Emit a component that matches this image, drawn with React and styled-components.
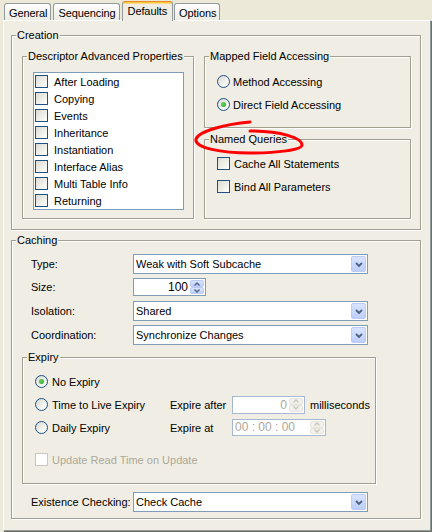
import React from 'react'
import styled, { createGlobalStyle } from 'styled-components'

const PANEL = '#f0eee4'

const GlobalStyle = createGlobalStyle`
	html, body {
		margin: 0;
		padding: 0;
		background: #ece9d8;
	}
	body {
		font-family: 'Liberation Sans', Arial, sans-serif;
		font-size: 11px;
		color: #000;
	}
`

const Window = styled.div`
	position: relative;
	width: 432px;
	height: 532px;
	box-sizing: border-box;
	padding: 1px 0 0 3px;
	background: #ece9d8;
	overflow: hidden;
`

const TabStrip = styled.div`
	display: flex;
	align-items: flex-end;
	height: 19px;
	padding-left: 1px;
`

const Tab = styled.div`
	position: relative;
	box-sizing: border-box;
	height: ${(p) => (p.$active ? '20px' : '17px')};
	margin-right: ${(p) => (p.$active ? '1px' : '2px')};
	margin-bottom: ${(p) => (p.$active ? '-1px' : '0')};
	padding: ${(p) => (p.$active ? '2px 5px 0' : '2px 3px 0 4px')};
	line-height: 14px;
	border: 1px solid #919b9c;
	border-top-color: ${(p) => (p.$active ? '#e68b2c' : '#919b9c')};
	border-bottom: none;
	border-radius: 3px 3px 0 0;
	background: ${(p) => (p.$active ? PANEL : 'linear-gradient(#fefefe, #ecebe4)')};
	box-shadow: ${(p) => (p.$active ? 'inset 0 1px 0 #ffc83c, inset 0 2px 0 #fbd989' : 'none')};
	z-index: ${(p) => (p.$active ? 1 : 0)};
	letter-spacing: -0.1px;
`

const Panel = styled.div`
	box-sizing: border-box;
	width: 428px;
	height: 511px;
	padding: 8px 9px 0 7px;
	background: ${PANEL};
	border: 1px solid #fff;
	border-right-color: #919b9c;
	border-bottom-color: #919b9c;
	box-shadow: 1px 1px 0 #6f6d62;
	display: flex;
	flex-direction: column;
`

const Group = styled.fieldset`
	box-sizing: border-box;
	margin: ${(p) => p.$margin || '0'};
	padding: 0;
	min-width: 0;
	width: ${(p) => (p.$w ? `${p.$w}px` : 'auto')};
	flex: ${(p) => (p.$grow ? '1' : 'none')};
	border: 1px solid #a09f90;
	box-shadow: inset 1px 1px 0 #fff, 1px 1px 0 #fff;
	display: flex;
	flex-direction: column;
`

const Legend = styled.legend`
	margin-left: 4px;
	padding: 0 1px;
	line-height: 13px;
	background: ${PANEL};
`

const GroupBody = styled.div`
	padding: ${(p) => p.$pad};
	display: flex;
	flex-direction: ${(p) => (p.$row ? 'row' : 'column')};
	gap: ${(p) => p.$gap || '0'};
	flex: 1;
`

const Column = styled.div`
	display: flex;
	flex-direction: column;
	width: ${(p) => p.$w}px;
`

const List = styled.div`
	box-sizing: border-box;
	width: 151px;
	border: 1px solid #7f9db9;
	background: #fff;
`

const ListRow = styled.div`
	display: flex;
	align-items: center;
	gap: 6px;
	height: 17px;
	padding-left: 1px;
`

const OptionRow = styled.div`
	display: flex;
	align-items: center;
	gap: ${(p) => p.$gap || '4px'};
	height: 23px;
	padding-left: ${(p) => p.$indent || '12px'};
	margin-top: ${(p) => p.$top || '0'};
	color: ${(p) => (p.$disabled ? '#aca899' : '#000')};
`

const Check = styled.span`
	flex: none;
	box-sizing: border-box;
	width: 13px;
	height: 13px;
	border: 1px solid ${(p) => (p.$disabled ? '#cac8bb' : '#1c5180')};
	background: ${(p) => (p.$disabled ? '#fff' : 'linear-gradient(135deg, #dcdbd3 0%, #f4f4f0 70%, #fff 100%)')};
`

const Radio = styled.span`
	flex: none;
	box-sizing: border-box;
	width: 13px;
	height: 13px;
	border-radius: 50%;
	border: 1px solid #1c5180;
	background: linear-gradient(135deg, #d9d8cf 0%, #f3f3ef 60%, #fff 100%);
	display: flex;
	align-items: center;
	justify-content: center;

	&::after {
		content: '';
		display: ${(p) => (p.$checked ? 'block' : 'none')};
		width: 5px;
		height: 5px;
		border-radius: 50%;
		background: radial-gradient(circle at 40% 40%, #62d75e, #21a121);
	}
`

const Field = styled.div`
	display: flex;
	align-items: ${(p) => (p.$top ? 'flex-start' : 'center')};
	height: ${(p) => p.$h || 20}px;
	padding-left: 9px;
	margin-top: ${(p) => p.$mt || '0'};
`

const FieldLabel = styled.span`
	width: 102px;
	flex: none;
	${(p) => p.$top && 'line-height: 18px;'}
`

const Combo = styled.div`
	box-sizing: border-box;
	display: flex;
	align-items: center;
	width: 235px;
	height: 20px;
	padding: 1px 1px 1px 2px;
	border: 1px solid #7f9db9;
	background: #fff;
`

const ComboText = styled.span`
	flex: 1;
	white-space: nowrap;
`

const DropButton = styled.span`
	box-sizing: border-box;
	width: 15px;
	height: 16px;
	border: 1px solid #bccbf3;
	border-radius: 2px;
	background: linear-gradient(#d9e4fe, #bccffb);
	display: flex;
	align-items: center;
	justify-content: center;
`

const Spinner = styled.div`
	box-sizing: border-box;
	display: flex;
	align-items: stretch;
	width: ${(p) => p.$w}px;
	height: ${(p) => p.$h}px;
	padding: 1px;
	border: 1px solid ${(p) => (p.$disabled ? '#a6b8cf' : '#7f9db9')};
	background: #fff;
	color: ${(p) => (p.$disabled ? '#aca899' : '#000')};
`

const SpinValue = styled.span`
	flex: 1;
	text-align: ${(p) => p.$align || 'right'};
	padding: 0 2px 0 1px;
	line-height: ${(p) => p.$lh || 14}px;
	font-size: ${(p) => p.$fs || 11}px;
	white-space: nowrap;
`

const SpinButtons = styled.div`
	display: flex;
	flex-direction: column;
	width: 14px;
`

const SpinButton = styled.span`
	flex: 1;
	box-sizing: border-box;
	border: 1px solid ${(p) => (p.$disabled ? '#e6e4dc' : '#bccbf3')};
	border-radius: 2px;
	background: ${(p) => (p.$disabled ? '#f2f1ec' : 'linear-gradient(#d9e4fe, #bccffb)')};
	display: flex;
	align-items: center;
	justify-content: center;
`

const ExpiryChoice = styled.span`
	display: flex;
	align-items: center;
	gap: 4px;
	width: 131px;
	flex: none;
`

const ExpiryLabel = styled.span`
	width: 58px;
	flex: none;
`

const Unit = styled.span`
	margin-left: 1px;
`

const Scribble = styled.svg`
	position: absolute;
	left: 0;
	top: 0;
	pointer-events: none;
`

const Chevron = ({ down = true, color = '#4d6185' }) => (
	<svg width="8" height="5" viewBox="0 0 8 5">
		<path
			d={down ? 'M1 1 L4 4 L7 1' : 'M1 4 L4 1 L7 4'}
			fill="none"
			stroke={color}
			strokeWidth="1.8"
		/>
	</svg>
)

const SmallArrow = ({ down, color }) => (
	<svg width="6" height="4" viewBox="0 0 6 4">
		<path d={down ? 'M0.5 0.5 L3 3 L5.5 0.5' : 'M0.5 3.5 L3 1 L5.5 3.5'} fill="none" stroke={color} strokeWidth="1.4" />
	</svg>
)

function ComboBox({ value }) {
	return (
		<Combo>
			<ComboText>{value}</ComboText>
			<DropButton>
				<Chevron />
			</DropButton>
		</Combo>
	)
}

function SpinBox({ value, w, h, disabled, align, fs }) {
	const arrow = disabled ? '#c9c7bc' : '#4d6185'
	return (
		<Spinner $w={w} $h={h} $disabled={disabled}>
			<SpinValue $align={align} $lh={h - 4} $fs={fs}>
				{value}
			</SpinValue>
			<SpinButtons>
				<SpinButton $disabled={disabled}>
					<SmallArrow color={arrow} />
				</SpinButton>
				<SpinButton $disabled={disabled}>
					<SmallArrow down color={arrow} />
				</SpinButton>
			</SpinButtons>
		</Spinner>
	)
}

const properties = [
	'After Loading',
	'Copying',
	'Events',
	'Inheritance',
	'Instantiation',
	'Interface Alias',
	'Multi Table Info',
	'Returning',
]

const tabs = ['General', 'Sequencing', 'Defaults', 'Options']

export default function App() {
	return (
		<Window>
			<GlobalStyle />
			<TabStrip>
				{tabs.map((t) => (
					<Tab key={t} $active={t === 'Defaults'}>
						{t}
					</Tab>
				))}
			</TabStrip>
			<Panel>
				<Group $w={410}>
					<Legend>Creation</Legend>
					<GroupBody $row $gap="10px" $pad="8px 9px 10px 10px">
						<Group $w={172}>
							<Legend>Descriptor Advanced Properties</Legend>
							<GroupBody $pad="9px 0 8px 10px">
								<List>
									{properties.map((p) => (
										<ListRow key={p}>
											<Check />
											{p}
										</ListRow>
									))}
								</List>
							</GroupBody>
						</Group>
						<Column $w={207}>
							<Group>
								<Legend>Mapped Field Accessing</Legend>
								<GroupBody $pad="7px 0 11px 0">
									<OptionRow $gap="3px">
										<Radio />
										Method Accessing
									</OptionRow>
									<OptionRow $gap="3px">
										<Radio $checked />
										Direct Field Accessing
									</OptionRow>
								</GroupBody>
							</Group>
							<Group $grow $margin="5px 0 0 0">
								<Legend>Named Queries</Legend>
								<GroupBody $pad="6px 0 0 0">
									<OptionRow>
										<Check />
										Cache All Statements
									</OptionRow>
									<OptionRow>
										<Check />
										Bind All Parameters
									</OptionRow>
								</GroupBody>
							</Group>
						</Column>
					</GroupBody>
				</Group>

				<Group $w={410} $margin="4px 0 0 0">
					<Legend>Caching</Legend>
					<GroupBody $pad="7px 0 6px 10px">
						<Field>
							<FieldLabel>Type:</FieldLabel>
							<ComboBox value="Weak with Soft Subcache" />
						</Field>
						<Field $h={19} $mt="4px" $top>
							<FieldLabel $top>Size:</FieldLabel>
							<SpinBox value="100" w={73} h={18} fs={12} />
						</Field>
						<Field $mt="4px">
							<FieldLabel>Isolation:</FieldLabel>
							<ComboBox value="Shared" />
						</Field>
						<Field $mt="4px">
							<FieldLabel>Coordination:</FieldLabel>
							<ComboBox value="Synchronize Changes" />
						</Field>

						<Group $w={354} $margin="6px 0 0 0">
							<Legend>Expiry</Legend>
							<GroupBody $pad="6px 0 12px 0">
								<OptionRow>
									<Radio $checked />
									No Expiry
								</OptionRow>
								<OptionRow>
									<ExpiryChoice>
										<Radio />
										Time to Live Expiry
									</ExpiryChoice>
									<ExpiryLabel>Expire after</ExpiryLabel>
									<SpinBox value="0" w={73} h={18} disabled fs={12} />
									<Unit>milliseconds</Unit>
								</OptionRow>
								<OptionRow>
									<ExpiryChoice>
										<Radio />
										Daily Expiry
									</ExpiryChoice>
									<ExpiryLabel>Expire at</ExpiryLabel>
									<SpinBox value="00 : 00 : 00" w={94} h={17} disabled align="left" fs={12} />
								</OptionRow>
								<OptionRow $top="9px" $disabled>
									<Check $disabled />
									Update Read Time on Update
								</OptionRow>
							</GroupBody>
						</Group>

						<Field $mt="8px">
							<FieldLabel>Existence Checking:</FieldLabel>
							<ComboBox value="Check Cache" />
						</Field>
					</GroupBody>
				</Group>
			</Panel>

			<Scribble width="432" height="532" viewBox="0 0 432 532">
				<path
					d="M250 122 C226 124 199 131 196 139 C194 148 222 153 250 153 C277 153 302 150 302 145 C302 138 281 131 250 131"
					fill="none"
					stroke="#f00"
					strokeWidth="3"
					strokeLinecap="round"
				/>
			</Scribble>
		</Window>
	)
}
